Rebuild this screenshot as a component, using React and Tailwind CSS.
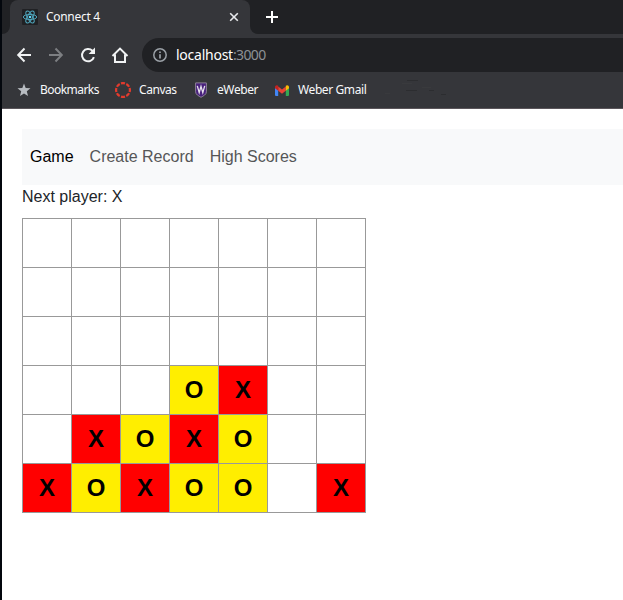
const BOARD = [
  '.......',
  '.......',
  '.......',
  '...OX..',
  '.XOXO..',
  'XOXOO.X',
];

const CELL_COLORS = {
  X: 'bg-[#ff0000]',
  O: 'bg-[#ffee00]',
  '.': 'bg-white',
};

function ReactLogo() {
  return (
    <svg width="16" height="16" viewBox="0 0 16 16" className="shrink-0">
      <rect width="16" height="16" rx="1" fill="#202124" />
      <g fill="none" stroke="#4fa6bd" strokeWidth="1">
        <ellipse cx="8" cy="8" rx="6.7" ry="2.6" />
        <ellipse cx="8" cy="8" rx="6.7" ry="2.6" transform="rotate(60 8 8)" />
        <ellipse cx="8" cy="8" rx="6.7" ry="2.6" transform="rotate(120 8 8)" />
      </g>
      <circle cx="8" cy="8" r="1.3" fill="#61dafb" />
    </svg>
  );
}

function CloseIcon() {
  return (
    <svg width="10" height="10" viewBox="0 0 10 10" className="shrink-0">
      <path d="M1.2 1.2 8.8 8.8M8.8 1.2 1.2 8.8" stroke="#e8eaed" strokeWidth="1.6" />
    </svg>
  );
}

function PlusIcon() {
  return (
    <svg width="12" height="12" viewBox="0 0 12 12" className="shrink-0">
      <path d="M6 0V12M0 6H12" stroke="#fff" strokeWidth="2" />
    </svg>
  );
}

function BackIcon() {
  return (
    <svg width="16" height="16" viewBox="0 0 16 16" className="shrink-0">
      <path d="M15 8H2.2M8.5 1.5 2.2 8 8.5 14.5" fill="none" stroke="#f1f3f4" strokeWidth="2" />
    </svg>
  );
}

function ForwardIcon() {
  return (
    <svg width="16" height="16" viewBox="0 0 16 16" className="shrink-0">
      <path d="M1 8H13.8M7.5 1.5 13.8 8 7.5 14.5" fill="none" stroke="#7d7f82" strokeWidth="2" />
    </svg>
  );
}

function ReloadIcon() {
  return (
    <svg width="16" height="16" viewBox="0 0 16 16" className="shrink-0">
      <path d="M13.9 10.1A6.1 6.1 0 1 1 12.4 3.8L13.8 5.2" fill="none" stroke="#f1f3f4" strokeWidth="2" />
      <path d="M15 0.6V7H8.6Z" fill="#f1f3f4" />
    </svg>
  );
}

function HomeIcon() {
  return (
    <svg width="18" height="18" viewBox="0 0 18 18" className="shrink-0">
      <path d="M1.5 10 9 2.6 16.5 10M4 8.5V16H14V8.5" fill="none" stroke="#f1f3f4" strokeWidth="2" />
    </svg>
  );
}

function InfoIcon() {
  return (
    <svg width="14" height="14" viewBox="0 0 14 14" className="shrink-0">
      <circle cx="7" cy="7" r="6.2" fill="none" stroke="#9aa0a6" strokeWidth="1.5" />
      <path d="M7 6.2V10.4M7 3.4V5" stroke="#9aa0a6" strokeWidth="1.7" />
    </svg>
  );
}

function StarIcon() {
  return (
    <svg width="14" height="14" viewBox="0 0 14 14" className="shrink-0">
      <path d="M7 .4 8.7 4.9 13.5 5.2 9.8 8.3 11 13.1 7 10.4 3 13.1 4.2 8.3.5 5.2 5.3 4.9Z" fill="#b8bcc1" />
    </svg>
  );
}

function CanvasIcon() {
  return (
    <svg width="16" height="16" viewBox="0 0 16 16" className="shrink-0">
      <circle cx="8" cy="8" r="6.9" fill="none" stroke="#e43b2d" strokeWidth="2.2" pathLength="80" strokeDasharray="7.4 2.6" strokeDashoffset="-1.3" transform="rotate(-22.5 8 8)" />
    </svg>
  );
}

function WeberIcon() {
  return (
    <svg width="12" height="16" viewBox="0 0 12 16" className="shrink-0">
      <path d="M.6.9H11.4V9.8C11.4 12.6 8.4 13.9 6 15.3 3.6 13.9.6 12.6.6 9.8Z" fill="#48207c" stroke="#8f8299" strokeWidth="1" />
      <path d="M2.3 3.8 4.2 10.6 6 4.3 7.8 10.6 9.7 3.8" fill="none" stroke="#e6e0ec" strokeWidth="1.3" />
    </svg>
  );
}

function GmailIcon() {
  return (
    <svg width="14" height="11" viewBox="0 0 14 11" className="shrink-0">
      <path d="M0 2V10Q0 11 1 11H3.2V4.2Z" fill="#4285f4" />
      <path d="M14 2V10Q14 11 13 11H10.8V4.2Z" fill="#34a853" />
      <path d="M3.2 1.6 7 4.5 10.8 1.6V5.7L7 8.7 3.2 5.7Z" fill="#ea4335" />
      <path d="M0 2.2C0 .2 1.9-.4 3.2.7V5.7L0 3.3Z" fill="#c5221f" />
      <path d="M14 2.2C14 .2 12.1-.4 10.8.7V5.7L14 3.3Z" fill="#fbbc04" />
    </svg>
  );
}

function TabStrip() {
  return (
    <div className="flex h-[34px] bg-[#202124]">
      <div className="flex w-2 items-end bg-[#35363a]">
        <div className="h-full w-full rounded-br-lg bg-[#202124]" />
      </div>
      <div className="flex w-60 items-center rounded-t-lg bg-[#35363a] pl-3 pr-[11px]">
        <ReactLogo />
        <span className="ml-2 grow whitespace-nowrap text-[12px] tracking-[-0.3px] text-[#f8f9fa]">Connect 4</span>
        <CloseIcon />
      </div>
      <div className="grow bg-[#35363a]">
        <div className="flex h-full items-center rounded-bl-lg bg-[#202124] pl-4">
          <PlusIcon />
        </div>
      </div>
    </div>
  );
}

function Toolbar() {
  return (
    <div className="flex h-[42px] items-center bg-[#35363a] pl-[14px]">
      <div className="flex items-center gap-4">
        <BackIcon />
        <ForwardIcon />
        <ReloadIcon />
      </div>
      <div className="ml-[15px]">
        <HomeIcon />
      </div>
      <div className="ml-[13px] flex h-[34px] grow items-center rounded-l-full bg-[#202124] pl-[11px]">
        <InfoIcon />
        <span className="ml-[9px] pb-px text-[14px] tracking-[-0.25px] text-white">
          localhost<span className="tracking-[-0.6px] text-[#8d9196]">:3000</span>
        </span>
      </div>
    </div>
  );
}

function BookmarksBar() {
  return (
    <div className="flex h-[33px] items-center border-b border-[#5b565b] bg-[#35363a] pb-1 pl-[15px] text-[12px] whitespace-nowrap text-[#f8f9fa]">
      <div className="flex w-[98px] items-center gap-[9px]">
        <StarIcon />
        <span className="tracking-[-0.55px]">Bookmarks</span>
      </div>
      <div className="flex w-[80px] items-center gap-2">
        <CanvasIcon />
        <span className="tracking-[-0.45px]">Canvas</span>
      </div>
      <div className="flex w-[80px] items-center gap-[10px]">
        <WeberIcon />
        <span className="tracking-[-0.4px]">eWeber</span>
      </div>
      <div className="flex items-center gap-[9px]">
        <GmailIcon />
        <span className="tracking-[-0.4px]">Weber Gmail</span>
      </div>
      <svg width="80" height="20" viewBox="0 0 80 20" className="ml-4 shrink-0">
        <path d="M25 .5H36M24 10.5H35M47 10.5H52M59 14.5H64" stroke="#2c2d30" />
        <path d="M3 13.5H8M20 3.5H30M40 7.5H49" stroke="#393a3d" />
      </svg>
    </div>
  );
}

function Square({ value }) {
  return (
    <div className={`-mt-px -mr-px flex size-[50px] items-center justify-center border border-[#999999] text-[24px] leading-[34px] font-bold text-black ${CELL_COLORS[value]}`}>
      {value === '.' ? '' : value}
    </div>
  );
}

export default function App() {
  return (
    <div className="flex h-[600px] w-[623px] overflow-hidden bg-white">
      <div className="w-[2px] shrink-0 bg-[#03070d]" />
      <div className="min-w-0 grow">
        <header className="font-['Noto_Sans',sans-serif]">
          <TabStrip />
          <Toolbar />
          <BookmarksBar />
        </header>
        <main className="pt-5 pl-5 font-['Liberation_Sans',Arial,sans-serif] text-[16px] leading-6 text-[#212529]">
          <nav className="flex h-14 items-center gap-4 bg-[#f8f9fa] px-2 text-[#555657]">
            <a className="text-black">Game</a>
            <a>Create Record</a>
            <a>High Scores</a>
          </nav>
          <div className="mb-[10px]">Next player: X</div>
          <div>
            {BOARD.map((row, r) => (
              <div key={r} className="flex">
                {row.split('').map((value, c) => (
                  <Square key={c} value={value} />
                ))}
              </div>
            ))}
          </div>
        </main>
      </div>
    </div>
  );
}
